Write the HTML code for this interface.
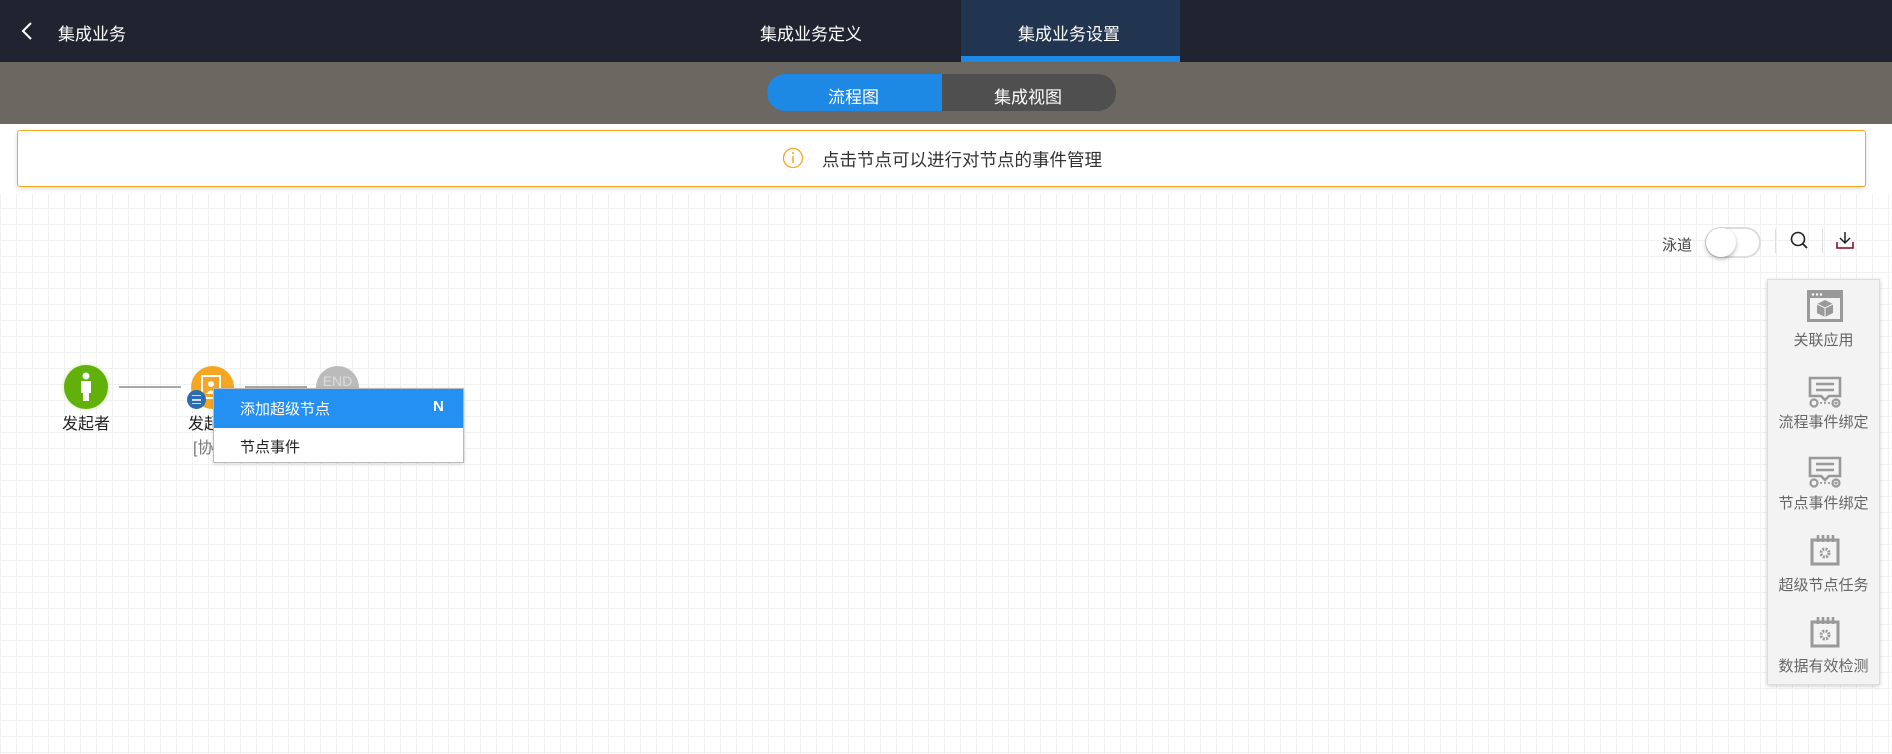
<!DOCTYPE html>
<html><head><meta charset="utf-8"><style>
*{margin:0;padding:0;box-sizing:border-box}
body{width:1892px;height:754px;overflow:hidden;font-family:"Liberation Sans","Noto Sans CJK SC",sans-serif;position:relative;
background-color:#fff;background-image:linear-gradient(#f1f1f1 1px,transparent 1px),linear-gradient(90deg,#f1f1f1 1px,transparent 1px);background-size:16px 16px}
.abs{position:absolute}
.top{left:0;top:0;width:1892px;height:62px;background:#1f2430;color:#fff;font-size:17px}
.sub{left:0;top:62px;width:1892px;height:62px;background:#6a6861}
.txt{white-space:nowrap}
</style></head><body>
<div class="abs top">
 <svg class="abs" style="left:20px;top:21px" width="14" height="20"><path d="M11 2 L3 10 L11 18" stroke="#fff" stroke-width="2" fill="none"/></svg>
 <div class="abs txt" style="left:58px;top:20px">集成业务</div>
 <div class="abs txt" style="left:760px;top:20px">集成业务定义</div>
 <div class="abs" style="left:961px;top:0;width:219px;height:62px;background:#213550"></div>
 <div class="abs" style="left:961px;top:56px;width:219px;height:6px;background:#1e88e5"></div>
 <div class="abs txt" style="left:1018px;top:20px">集成业务设置</div>
</div>
<div class="abs sub">
 <div class="abs" style="left:767px;top:12px;width:349px;height:37px;border-radius:18px;background:#4f4f4f;overflow:hidden">
  <div class="abs" style="left:0;top:0;width:175px;height:37px;background:#1e88e5"></div>
  <div class="abs txt" style="left:61px;top:9px;color:#fff;font-size:17px">流程图</div>
  <div class="abs txt" style="left:227px;top:9px;color:#fff;font-size:17px">集成视图</div>
 </div>
</div>
<div class="abs" style="left:0;top:124px;width:1892px;height:70px;background:#fff"></div>
<div class="abs" style="left:17px;top:130px;width:1849px;height:57px;border:1px solid #f5a623;border-radius:3px;background:#fff;box-shadow:0 2px 6px rgba(0,0,0,.12)">
 <svg class="abs" style="left:764px;top:16px" width="22" height="22"><circle cx="11" cy="11" r="9.5" fill="none" stroke="#f5a623" stroke-width="1.3"/><line x1="11" y1="9" x2="11" y2="16" stroke="#f5a623" stroke-width="1.5"/><circle cx="11" cy="6" r="1" fill="#f5a623"/></svg>
 <div class="abs txt" style="left:804px;top:16px;font-size:17.5px;color:#333">点击节点可以进行对节点的事件管理</div>
</div>
<!-- toolbar -->
<div class="abs txt" style="left:1662px;top:234px;font-size:15px;color:#444">泳道</div>
<div class="abs" style="left:1705px;top:227px;width:56px;height:31px;border-radius:16px;background:#fff;border:2px solid #ddd"></div>
<div class="abs" style="left:1706px;top:228px;width:30px;height:29px;border-radius:50%;background:#fff;box-shadow:0 2px 4px rgba(0,0,0,.3)"></div>
<div class="abs" style="left:1775px;top:229px;width:1px;height:24px;background:#ddd"></div>
<div class="abs" style="left:1822px;top:229px;width:1px;height:24px;background:#ddd"></div>
<svg class="abs" style="left:1789px;top:230px" width="22" height="22"><circle cx="9" cy="9" r="6.5" fill="none" stroke="#222" stroke-width="1.6"/><line x1="14" y1="14" x2="18" y2="18" stroke="#222" stroke-width="1.8"/></svg>
<svg class="abs" style="left:1834px;top:230px" width="22" height="22"><path d="M11 2 V13 M6 8 L11 13 L16 8" stroke="#222" stroke-width="1.5" fill="none"/><path d="M3 12 V18 H19 V12" stroke="#802" stroke-width="1.5" fill="none"/></svg>
<!-- side panel -->
<div class="abs" style="left:1767px;top:279px;width:113px;height:406px;background:#f3f3f3;border:1px solid #ddd;box-shadow:0 1px 4px rgba(0,0,0,.2);color:#666;font-size:15px">
 <svg class="abs" style="left:39px;top:10px" width="36" height="32"><rect x="1.5" y="1.5" width="33" height="29" fill="none" stroke="#999" stroke-width="3"/><rect x="1" y="1" width="34" height="7" fill="#999"/><circle cx="6" cy="4.5" r="1.2" fill="#fff"/><circle cx="10" cy="4.5" r="1.2" fill="#fff"/><circle cx="14" cy="4.5" r="1.2" fill="#fff"/><path d="M18 10 L26 14 L26 23 L18 27 L10 23 L10 14 Z" fill="#999"/><path d="M10 14 L18 18 L26 14 M18 18 V27" stroke="#f3f3f3" stroke-width="1" fill="none"/></svg>
 <div class="abs txt" style="left:0;width:111px;text-align:center;top:49px">关联应用</div>
 <svg class="abs" style="left:40px;top:96px" width="34" height="32"><path d="M2 2 H32 V20 H21 L17 24 L13 20 H2 Z" fill="none" stroke="#999" stroke-width="2.6"/><line x1="8" y1="8" x2="26" y2="8" stroke="#999" stroke-width="2.4"/><line x1="8" y1="14" x2="26" y2="14" stroke="#999" stroke-width="2.4"/><circle cx="6" cy="27" r="3.5" fill="none" stroke="#999" stroke-width="2.2"/><circle cx="28" cy="27" r="3.5" fill="none" stroke="#999" stroke-width="2.2"/><circle cx="28" cy="27" r="1.5" fill="#999"/><path d="M12 27 H22" stroke="#999" stroke-width="1.8" stroke-dasharray="2 2"/></svg>
 <div class="abs txt" style="left:0;width:111px;text-align:center;top:131px">流程事件绑定</div>
 <svg class="abs" style="left:40px;top:176px" width="34" height="32"><path d="M2 2 H32 V20 H21 L17 24 L13 20 H2 Z" fill="none" stroke="#999" stroke-width="2.6"/><line x1="8" y1="8" x2="26" y2="8" stroke="#999" stroke-width="2.4"/><line x1="8" y1="14" x2="26" y2="14" stroke="#999" stroke-width="2.4"/><circle cx="6" cy="27" r="3.5" fill="none" stroke="#999" stroke-width="2.2"/><circle cx="28" cy="27" r="3.5" fill="none" stroke="#999" stroke-width="2.2"/><circle cx="28" cy="27" r="1.5" fill="#999"/><path d="M12 27 H22" stroke="#999" stroke-width="1.8" stroke-dasharray="2 2"/></svg>
 <div class="abs txt" style="left:0;width:111px;text-align:center;top:212px">节点事件绑定</div>
 <svg class="abs" style="left:42px;top:254px" width="30" height="32"><rect x="2" y="6" width="26" height="24" fill="none" stroke="#999" stroke-width="3"/><path d="M8 1 V8 M13 1 V8 M18 1 V8 M23 1 V8" stroke="#999" stroke-width="2.6"/><circle cx="15" cy="19" r="4" fill="none" stroke="#999" stroke-width="3" stroke-dasharray="2 1.2"/></svg>
 <div class="abs txt" style="left:0;width:111px;text-align:center;top:294px">超级节点任务</div>
 <svg class="abs" style="left:42px;top:336px" width="30" height="32"><rect x="2" y="6" width="26" height="24" fill="none" stroke="#999" stroke-width="3"/><path d="M8 1 V8 M13 1 V8 M18 1 V8 M23 1 V8" stroke="#999" stroke-width="2.6"/><circle cx="15" cy="19" r="4" fill="none" stroke="#999" stroke-width="3" stroke-dasharray="2 1.2"/></svg>
 <div class="abs txt" style="left:0;width:111px;text-align:center;top:375px">数据有效检测</div>
</div>
<!-- flow -->
<div class="abs" style="left:119px;top:386px;width:62px;height:2px;background:#aaa"></div>
<div class="abs" style="left:245px;top:386px;width:62px;height:2px;background:#aaa"></div>
<div class="abs" style="left:64px;top:365px;width:44px;height:44px;border-radius:50%;background:#62b00a;box-shadow:0 0 4px #cde6a8"></div>
<svg class="abs" style="left:74px;top:371px" width="24" height="32"><circle cx="12" cy="5" r="3.5" fill="#fff"/><path d="M7 10 H17 V22 H15 V30 H9 V22 H7 Z" fill="#fff"/></svg>
<div class="abs txt" style="left:62px;top:410px;font-size:16px;color:#222">发起者</div>
<div class="abs" style="left:191px;top:366px;width:43px;height:43px;border-radius:50%;background:#f5a623"></div>
<svg class="abs" style="left:200px;top:374px" width="24" height="26"><rect x="2" y="2" width="18" height="22" fill="none" stroke="#fff" stroke-width="2"/><circle cx="11" cy="10" r="3" fill="#fff"/><path d="M6 20 Q11 13 16 20 Z" fill="#fff"/></svg>
<div class="abs" style="left:316px;top:366px;width:43px;height:43px;border-radius:50%;background:#bbb;color:#ddd;font-size:14px;text-align:center;line-height:30px">END</div>
<div class="abs" style="left:187px;top:390px;width:19px;height:19px;border-radius:50%;background:#2d6cb3"><div class="abs" style="left:5px;top:5px;width:9px;height:9px;border-top:1.5px solid #cde;border-bottom:1.5px solid #cde"></div><div class="abs" style="left:5px;top:9px;width:9px;height:1.5px;background:#cde"></div></div>
<div class="abs txt" style="left:188px;top:410px;font-size:16px;color:#222">发起</div>
<div class="abs txt" style="left:193px;top:434px;font-size:16px;color:#777">[协</div>
<div class="abs" style="left:213px;top:388px;width:251px;height:75px;background:#fff;border:1px solid #bbb;box-shadow:0 1px 4px rgba(0,0,0,.15)">
 <div class="abs" style="left:0;top:0;width:249px;height:39px;background:#2490f2"></div>
 <div class="abs txt" style="left:26px;top:9px;font-size:15px;color:#fff">添加超级节点</div>
 <div class="abs txt" style="left:219px;top:9px;font-size:15px;color:#fff;font-weight:bold">N</div>
 <div class="abs txt" style="left:26px;top:47px;font-size:15px;color:#222">节点事件</div>
</div>
</body></html>
